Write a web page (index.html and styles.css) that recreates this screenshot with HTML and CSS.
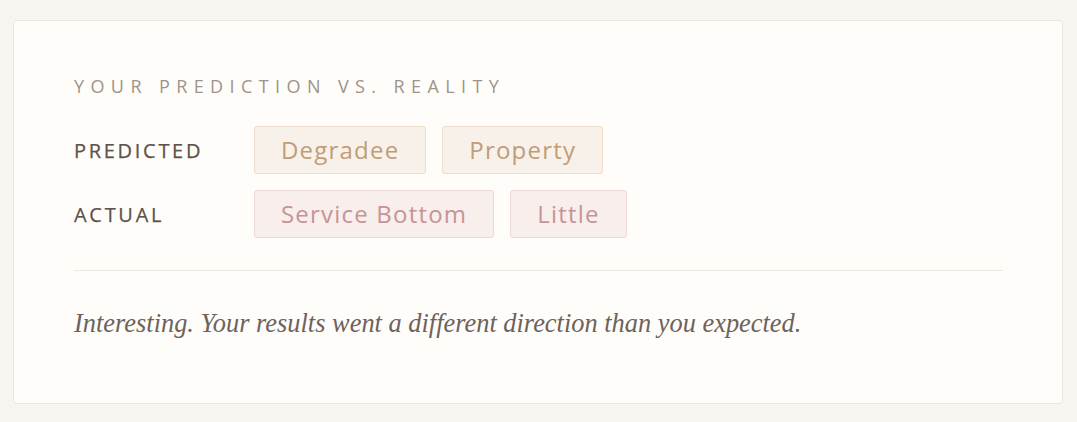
FILE: index.html
```html
<!DOCTYPE html>
<html>
<head>
<meta charset="utf-8">
<link rel="stylesheet" href="styles.css">
</head>
<body>
<div class="page">
  <section class="card">
    <h2 class="title">Your prediction vs. reality</h2>
    <div class="rows">
      <div class="row">
        <div class="label">Predicted</div>
        <div class="chips">
          <span class="chip chip-pred">Degradee</span>
          <span class="chip chip-pred">Property</span>
        </div>
      </div>
      <div class="row">
        <div class="label">Actual</div>
        <div class="chips">
          <span class="chip chip-act">Service Bottom</span>
          <span class="chip chip-act">Little</span>
        </div>
      </div>
    </div>
    <hr class="divider">
    <p class="note">Interesting. Your results went a different direction than you expected.</p>
  </section>
</div>
</body>
</html>
```

FILE: styles.css
```css
html, body {
  margin: 0;
  padding: 0;
  background: #f8f5f1;
}

.page {
  padding: 20px 14px 19px 13px;
}

.card {
  background: #fefdfa;
  border: 1px solid #ebe5de;
  border-radius: 4px;
  padding: 55px 59px 64px 60px;
  font-family: "Open Sans", "Liberation Sans", sans-serif;
}

.title {
  margin: 0;
  font-size: 18px;
  font-weight: 400;
  letter-spacing: 6.4px;
  text-transform: uppercase;
  color: #9f9389;
  line-height: 20px;
}

.rows {
  display: flex;
  flex-direction: column;
  gap: 16px;
  margin-top: 30px;
}

.row {
  display: flex;
  align-items: center;
}

.label {
  width: 180px;
  flex: none;
  font-size: 20px;
  font-weight: 400;
  letter-spacing: 2.7px;
  text-transform: uppercase;
  color: #5e524a;
  -webkit-text-stroke: 0.25px #5e524a;
}

.chips {
  display: flex;
  gap: 16px;
}

.chip {
  display: inline-block;
  height: 46px;
  line-height: 46px;
  padding: 0 26px;
  border-radius: 3px;
  font-size: 24px;
  letter-spacing: 1.2px;
}

.chip-pred {
  background: #f8f1e9;
  border: 1px solid #eeddc9;
  color: #c09d78;
}

.chip-act {
  background: #f8eeec;
  border: 1px solid #eed8d7;
  color: #c79396;
}

.divider {
  margin: 32px 0 0 0;
  border: 0;
  border-top: 1px solid #ede7e0;
  height: 0;
}

.note {
  margin: 36px 0 0 0;
  font-family: "Liberation Serif", serif;
  font-style: italic;
  font-size: 26.4px;
  line-height: 32px;
  color: #6e625c;
}
```
